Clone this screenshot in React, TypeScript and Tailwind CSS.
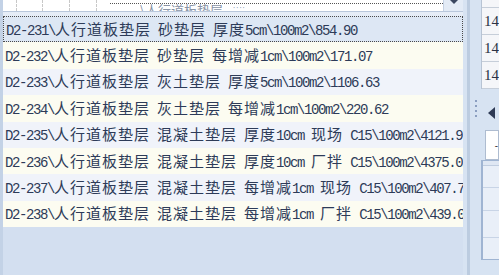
import React from 'react';

const rows = [
  'D2-231\\人行道板垫层 砂垫层 厚度5cm\\100m2\\854.90',
  'D2-232\\人行道板垫层 砂垫层 每增减1cm\\100m2\\171.07',
  'D2-233\\人行道板垫层 灰土垫层 厚度5cm\\100m2\\1106.63',
  'D2-234\\人行道板垫层 灰土垫层 每增减1cm\\100m2\\220.62',
  'D2-235\\人行道板垫层 混凝土垫层 厚度10cm 现场 C15\\100m2\\4121.97',
  'D2-236\\人行道板垫层 混凝土垫层 厚度10cm 厂拌 C15\\100m2\\4375.02',
  'D2-237\\人行道板垫层 混凝土垫层 每增减1cm 现场 C15\\100m2\\407.76',
  'D2-238\\人行道板垫层 混凝土垫层 每增减1cm 厂拌 C15\\100m2\\439.05',
];

// 中文和西文分开排，西文半角 7px，中文全角 16px
const MixedText: React.FC<{ text: string }> = ({ text }) => (
  <span className="whitespace-pre">
    {text.split(/([\u4e00-\u9fff]+)/).map((part, i) =>
      /[\u4e00-\u9fff]/.test(part) ? (
        <span key={i} className="font-['Noto_Sans_CJK_SC',sans-serif] text-[15px] tracking-[1px]">
          {part}
        </span>
      ) : (
        <span key={i} className="font-['Liberation_Mono',monospace] text-[14px] tracking-[-1.4px]">
          {part}
        </span>
      )
    )}
  </span>
);

const App: React.FC = () => {
  return (
    <div className="w-[499px] h-[275px] flex bg-[#d4e0f0] overflow-hidden text-[#2d3b58]">
      {/* 左侧列表 */}
      <div className="w-[463px] flex flex-col border-l-[3px] border-[#c3d2e6]">
        {/* 顶部被裁的下拉框 */}
        <div className="h-[16px] flex flex-col">
          <div className="h-[12px] flex bg-white border-b border-[#b9c8dc]">
            <div className="w-[14px] border-r border-dashed border-[#c8c8c8]" />
            <div className="w-[26px] border-r border-dashed border-[#c8c8c8]" />
            <div className="w-[27px] border-r border-dashed border-[#c8c8c8]" />
            <div className="w-[27px] border-r border-dashed border-[#c8c8c8]" />
            <div className="flex-1 flex flex-col">
              <div className="h-[4px] ml-[13px] border-b border-dotted border-[#555]" />
              <div className="h-[7px] overflow-hidden ml-[43px] flex items-end">
                <span className="font-['Noto_Sans_CJK_SC',sans-serif] text-[13px] leading-[14px] text-[#8a94a6] -mb-[6px]">
                  \人行道板垫层
                </span>
                <span className="ml-[10px] text-[#9aa8c0] text-[8px] leading-[6px] tracking-[1px]">····</span>
              </div>
            </div>
            <div className="w-[20px] bg-[#e3ebf6] border-l border-[#c5d2e4] flex justify-center">
              <div className="w-0 h-0 border-l-[4px] border-r-[4px] border-t-[4px] border-l-transparent border-r-transparent border-t-[#3a4660]" />
            </div>
          </div>
          <div className="flex-1 bg-[#e6edf7]" />
        </div>

        {rows.map((r, i) => (
          <div
            key={r}
            className={`h-[26.4px] flex items-center pl-[2px] overflow-hidden ${
              i === 0
                ? 'bg-[#dde7f4] border border-dotted border-[#4a4a4a]'
                : i % 2 === 1
                ? 'bg-[#fcfcf1]'
                : 'bg-[#f0f3fa]'
            }`}
          >
            <MixedText text={r} />
          </div>
        ))}
        <div className="flex-1 bg-[#d3dff0]" />
      </div>

      {/* 分隔条 */}
      <div className="w-[18px] flex">
        <div className="w-[4px] bg-[#d7e3f2]" />
        <div className="w-[3px] bg-[#bccce0]" />
        <div className="flex-1 bg-[#d7e3f2] flex flex-col items-center pt-[100px] gap-[3px]">
          <div className="w-[2px] h-[2px] bg-[#8b9ec0]" />
          <div className="w-[2px] h-[2px] bg-[#8b9ec0]" />
          <div className="w-[2px] h-[2px] bg-[#8b9ec0]" />
          <div className="w-[2px] h-[2px] bg-[#8b9ec0]" />
        </div>
      </div>

      {/* 右侧 */}
      <div className="flex-1 flex flex-col bg-[#d7e3f2]">
        <div className="flex flex-col border-l border-[#b8c4d4] bg-[#f5f6f9]">
          <div className="h-[8px] border-b border-[#c6ced9]" />
          {['14', '14', '14'].map((t, i) => (
            <div
              key={i}
              className="h-[27px] border-b border-[#c6ced9] flex items-center pl-[2px] font-['Liberation_Serif',serif] text-[15px] text-[#2a3245]"
            >
              {t}
            </div>
          ))}
        </div>
        <div className="h-[41px] flex items-center pl-[7px] pt-[6px]">
          <div className="w-0 h-0 border-t-[6px] border-b-[6px] border-r-[7px] border-t-transparent border-b-transparent border-r-[#2e3a55]" />
        </div>
        <div className="h-[30px] ml-[4px] bg-white border border-[#aebcd0] flex items-center justify-end">
          <span className="text-[10px] leading-none text-[#333]">-</span>
        </div>
        <div className="h-[100px] border-l-2 border-t border-b border-[#9fb4d2] bg-[#e9eff8] flex flex-col">
          <div className="h-[5px] bg-[#dfe7f3] border-b border-[#c0cde0]" />
          <div className="h-[22px] border-b border-[#c8d4e6]" />
          <div className="h-[23px] border-b border-[#c8d4e6]" />
          <div className="h-[27px] border-b border-[#c8d4e6]" />
          <div className="flex-1" />
        </div>
      </div>
    </div>
  );
};

export default App;
